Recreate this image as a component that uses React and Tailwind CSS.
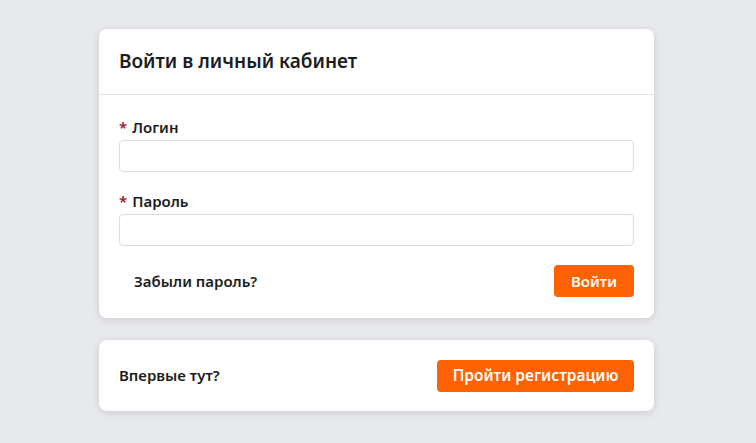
export default function App() {
  return (
    <div
      className="min-h-screen bg-[#e8e9ed] pt-[29px] pl-[99px]"
      style={{ fontFamily: '"Noto Sans", sans-serif' }}
    >
      <div className="w-[555px] flex flex-col gap-[22px]">
        {/* форма входа */}
        <div className="h-[289px] bg-white rounded-lg shadow-[0_2px_8px_rgba(0,0,0,0.12)]">
          <div className="h-[66px] flex items-center px-5 border-b border-[#e3e4e8]">
            <h1 className="text-[19px] font-semibold text-[#1c1c1e]">Войти в личный кабинет</h1>
          </div>
          <div className="px-5 pt-[21px] flex flex-col">
            <label className="text-[15px] font-semibold text-[#1c1c1e] leading-[22px]">
              <span className="text-[#a1122b] mr-[5px]">*</span>Логин
            </label>
            <input className="mt-[2px] h-8 w-full rounded border border-[#dcdde2] outline-none px-3" />
            <label className="mt-[18px] text-[15px] font-semibold text-[#1c1c1e] leading-[22px]">
              <span className="text-[#a1122b] mr-[5px]">*</span>Пароль
            </label>
            <input type="password" className="mt-[2px] h-8 w-full rounded border border-[#dcdde2] outline-none px-3" />
            <div className="mt-[19px] flex items-center justify-between">
              <button className="px-[15px] h-8 text-[15px] font-semibold text-[#1c1c1e]">Забыли пароль?</button>
              <button className="h-8 w-20 rounded bg-[#ff6200] text-white text-[15px] font-semibold">Войти</button>
            </div>
          </div>
        </div>

        {/* регистрация */}
        <div className="bg-white rounded-lg shadow-[0_2px_8px_rgba(0,0,0,0.12)] h-[71px] px-5 flex items-center justify-between">
          <span className="text-[15px] font-semibold text-[#1c1c1e]">Впервые тут?</span>
          <button className="h-8 w-[197px] rounded bg-[#ff6200] text-white text-[15.5px] font-semibold">Пройти регистрацию</button>
        </div>
      </div>
    </div>
  );
}
